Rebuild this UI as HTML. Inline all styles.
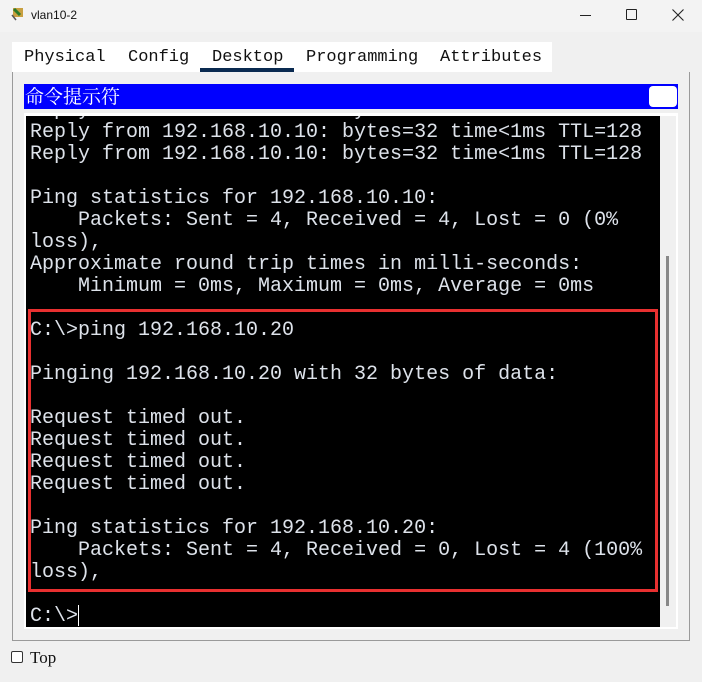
<!DOCTYPE html>
<html><head><meta charset="utf-8"><style>
*{margin:0;padding:0;box-sizing:border-box}
body{width:702px;height:682px;background:#f0f0f0;position:relative;overflow:hidden;font-family:"Liberation Sans",sans-serif}
.abs{position:absolute}
#title{left:0;top:0;width:702px;height:32px;background:#f3f3f3}
#tabs{left:12px;top:42px;width:540px;height:30px;background:#fff}
.tab{position:absolute;top:6px;font-family:"Liberation Mono",monospace;font-size:17px;color:#111}
#panel{left:12px;top:72px;width:678px;height:569px;border:1px solid #9a9a9a;border-top:none;background:#f0f0f0}
#blue{left:24px;top:84px;width:654px;height:25px;background:#0000ff;color:#fff;font-family:"Noto Serif CJK SC",serif;font-size:19px;line-height:24px;padding-left:1px}
#btn{left:649px;top:86px;width:28px;height:21px;background:#fff;border-radius:4px}
#term{left:26px;top:116px;width:634px;height:511px;background:#000;overflow:hidden}
#white{left:24px;top:113px;width:654px;height:516px;background:#fff}
pre{position:absolute;left:4px;top:-16px;font-family:"Liberation Mono",monospace;font-size:20px;line-height:22px;color:#dde2ea}
#red{left:28px;top:309px;width:630px;height:283px;border:3px solid #e83030}
</style></head><body>
<div class="abs" id="title"></div>
<svg class="abs" style="left:10px;top:6px" width="16" height="16"><rect x="3" y="2" width="10" height="9" fill="#c8a040"/><path d="M4 3 L10 9" stroke="#2a7a2a" stroke-width="3"/><path d="M2 9 L6 14" stroke="#555" stroke-width="1.5"/></svg>
<div class="abs" style="left:31px;top:8px;font-size:12px;color:#111">vlan10-2</div>
<div class="abs" style="left:580px;top:15px;width:11px;height:1px;background:#222"></div>
<div class="abs" style="left:626px;top:9px;width:11px;height:11px;border:1px solid #222;border-radius:1px"></div>
<svg class="abs" style="left:672px;top:9px" width="12" height="12"><path d="M0.5 0.5L11.5 11.5M11.5 0.5L0.5 11.5" stroke="#222" stroke-width="1.1"/></svg>
<div class="abs" id="tabs">
<span class="tab" style="left:12px">Physical</span>
<span class="tab" style="left:116px">Config</span>
<span class="tab" style="left:200px">Desktop</span>
<span class="tab" style="left:294px">Programming</span>
<span class="tab" style="left:428px">Attributes</span>
<div class="abs" style="left:188px;top:26px;width:94px;height:4px;background:#0a2a50"></div>
</div>
<div class="abs" id="panel"></div>
<div class="abs" id="blue">命令提示符</div>
<div class="abs" id="btn"></div>
<div class="abs" id="white"></div>
<div class="abs" style="left:660px;top:116px;width:16px;height:511px;background:#f0f0f0"></div>
<div class="abs" style="left:666px;top:256px;width:3px;height:350px;background:#888"></div>
<div class="abs" id="term"><pre>Reply from 192.168.10.10: bytes=32 time&lt;1ms TTL=128
Reply from 192.168.10.10: bytes=32 time&lt;1ms TTL=128
Reply from 192.168.10.10: bytes=32 time&lt;1ms TTL=128

Ping statistics for 192.168.10.10:
    Packets: Sent = 4, Received = 4, Lost = 0 (0%
loss),
Approximate round trip times in milli-seconds:
    Minimum = 0ms, Maximum = 0ms, Average = 0ms

C:\&gt;ping 192.168.10.20

Pinging 192.168.10.20 with 32 bytes of data:

Request timed out.
Request timed out.
Request timed out.
Request timed out.

Ping statistics for 192.168.10.20:
    Packets: Sent = 4, Received = 0, Lost = 4 (100%
loss),

C:\&gt;</pre></div>
<div class="abs" style="left:78px;top:605px;width:1px;height:21px;background:#fff"></div>
<div class="abs" id="red"></div>
<div class="abs" style="left:11px;top:651px;width:12px;height:12px;border:1px solid #333;border-radius:2px;background:#fff"></div>
<div class="abs" style="left:30px;top:648px;font-family:'Liberation Serif',serif;font-size:17px;color:#111">Top</div>
</body></html>
